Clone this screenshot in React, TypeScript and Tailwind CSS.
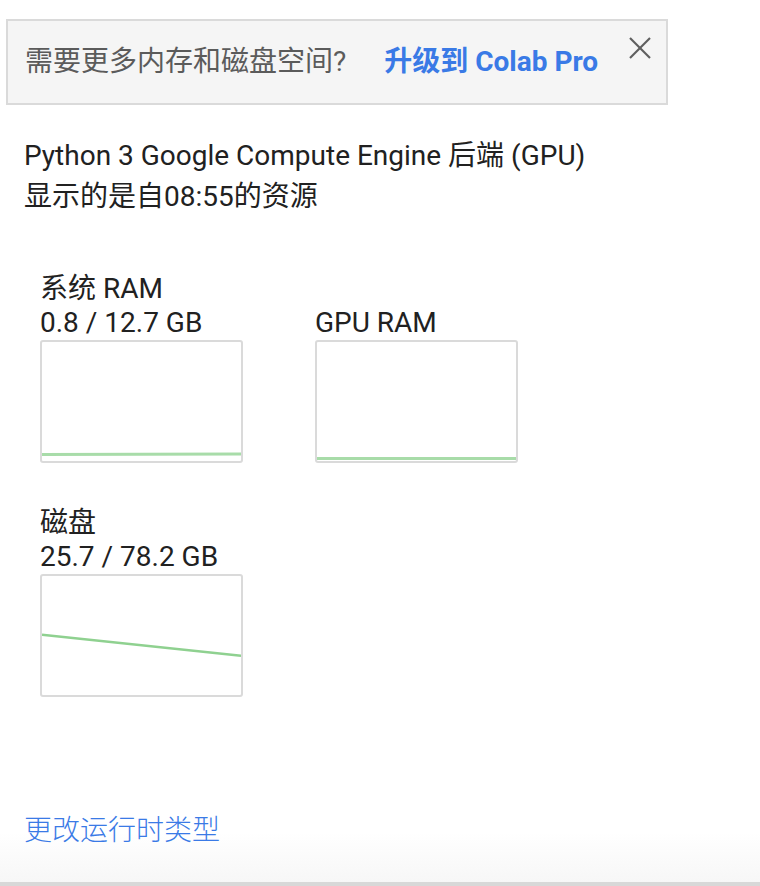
import React from "react";

const font = { fontFamily: 'Roboto, "Noto Sans CJK SC", sans-serif' };

function Chart({ children }: { children: React.ReactNode }) {
  return (
    <div className="w-[203px] h-[123px] border-2 border-[#dadada] rounded-[3px] bg-white overflow-hidden">
      <svg width="199" height="119" viewBox="0 0 199 119" className="block">
        {children}
      </svg>
    </div>
  );
}

export default function App() {
  return (
    <div className="w-[760px] h-[886px] bg-white relative overflow-hidden text-[#212121]" style={font}>
      <div className="absolute left-0 right-0 bottom-[4px] h-[50px] bg-gradient-to-b from-white to-[#f7f7f7]" />
      <div className="absolute left-0 right-0 bottom-0 h-[4px] bg-[#d8d8d8]" />

      <div className="relative flex flex-col">
        {/* Banner */}
        <div className="mt-[19px] ml-[6px] w-[662px] h-[86px] border-2 border-[#dadada] bg-[#f5f5f5] flex items-start">
          <div className="flex items-center h-full pl-[17px]">
            <span className="text-[28px] text-[#5b5b5b]">需要更多内存和磁盘空间?</span>
            <span className="ml-[38px] text-[28px] font-bold text-[#3a7ae6]">升级到 Colab Pro</span>
          </div>
          <svg className="ml-auto mr-[14px] mt-[16px]" width="24" height="22" viewBox="0 0 24 22">
            <line x1="2" y1="1" x2="22" y2="21" stroke="#5f5f5f" strokeWidth="2.2" />
            <line x1="22" y1="1" x2="2" y2="21" stroke="#5f5f5f" strokeWidth="2.2" />
          </svg>
        </div>

        {/* Runtime info */}
        <div className="ml-[24px] mt-[30px] text-[28px] leading-[41px]">
          <div>Python 3 Google Compute Engine 后端 (GPU)</div>
          <div>显示的是自08:55的资源</div>
        </div>

        {/* Charts */}
        <div className="ml-[40px] mt-[55px] flex gap-[72px]">
          <div className="flex flex-col">
            <div className="text-[28px] leading-[34px]">系统 RAM</div>
            <div className="text-[28px] leading-[34px]">0.8 / 12.7 GB</div>
            <Chart>
              <line x1="0" y1="112.5" x2="199" y2="112" stroke="#a8dca9" strokeWidth="3" />
            </Chart>
          </div>
          <div className="flex flex-col">
            <div className="text-[28px] leading-[34px]">&nbsp;</div>
            <div className="text-[28px] leading-[34px]">GPU RAM</div>
            <Chart>
              <line x1="0" y1="116.5" x2="199" y2="116.5" stroke="#a8dca9" strokeWidth="3" />
            </Chart>
          </div>
        </div>

        <div className="ml-[40px] mt-[43px] flex flex-col">
          <div className="text-[28px] leading-[34px]">磁盘</div>
          <div className="text-[28px] leading-[34px]">25.7 / 78.2 GB</div>
          <Chart>
            <line x1="0" y1="58.7" x2="199" y2="79.7" stroke="#8fd190" strokeWidth="2.5" />
          </Chart>
        </div>

        <div className="ml-[24px] mt-[113px] text-[28px] leading-[41px] text-[#3a7ae6] font-light">更改运行时类型</div>
      </div>
    </div>
  );
}
